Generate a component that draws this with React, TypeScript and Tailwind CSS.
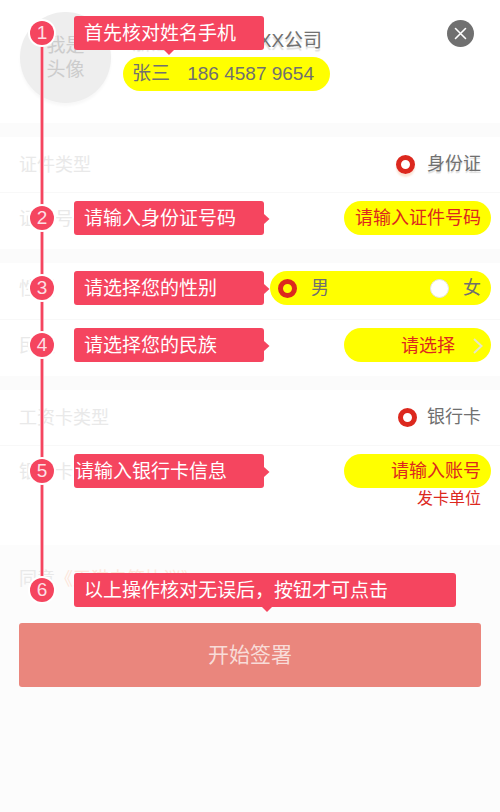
import { useState, type ReactNode } from 'react';

type Arrow = 'right' | 'down';

interface GuideProps {
  step: number;
  text: string;
  top?: string;
  width?: string;
  padding?: string;
  arrow?: ReactNode;
}

function ArrowMark({ direction, className }: { direction: Arrow; className: string }) {
  return (
    <svg
      className={`absolute text-[#f5455f] ${className}`}
      width={direction === 'right' ? 6 : 12}
      height={direction === 'right' ? 12 : 6}
      viewBox={direction === 'right' ? '0 0 6 12' : '0 0 12 6'}
      fill="currentColor"
      aria-hidden="true"
    >
      <path d={direction === 'right' ? 'M0 1L5.5 6L0 11Z' : 'M1 0L6 5L11 0Z'} />
    </svg>
  );
}

const rightArrow = <ArrowMark direction="right" className="left-full top-3" />;

function Guide({ step, text, top = 'top-2', width = 'w-[190px]', padding = 'px-2.5', arrow = rightArrow }: GuideProps) {
  return (
    <div className={`pointer-events-none absolute left-[30px] z-20 flex items-center gap-5 ${top}`}>
      <span className="flex size-6 items-center justify-center rounded-full bg-[#f5455f] text-[19px] leading-6 text-[#fddfe4] ring-2 ring-white">
        {step}
      </span>
      <div className={`relative h-[34px] rounded-[3px] bg-[#f5455f] text-[19px] leading-[36px] whitespace-nowrap text-white ${width} ${padding}`}>
        {text}
        {arrow}
      </div>
    </div>
  );
}

function Section({ children }: { children: ReactNode }) {
  return <section className="divide-y divide-[#f8f8f8] bg-white">{children}</section>;
}

function Gap() {
  return <div className="h-[14px] bg-[#fbfbfb]" />;
}

const radioClass =
  'size-[19px] shrink-0 appearance-none rounded-full border border-[#e4e4e4] bg-white checked:border-[5px] checked:border-[#dc281e] checked:bg-transparent';
const rowClass = 'relative flex items-start justify-between pt-2 pr-[9px] pl-[19px]';
const labelClass = 'text-[18px] leading-[36px] text-[#e9e9e9]';
const fieldClass =
  'h-[34px] w-[147px] rounded-full bg-[#ffff00] px-2.5 text-right text-[18px] text-[#dc281e] outline-none placeholder:text-[#dc281e] placeholder:opacity-100';

export default function App() {
  const [gender, setGender] = useState('male');
  const [idNumber, setIdNumber] = useState('');
  const [account, setAccount] = useState('');

  return (
    <main className="min-h-screen bg-[#fcfcfc] font-['Liberation_Sans','Noto_Sans_CJK_SC',sans-serif] text-[#707070]">
      <div className="relative">
        {/* Step line */}
        <div className="absolute top-[33px] bottom-[33px] left-[40px] z-10 w-[4px] border-x border-[#fab0bc] bg-[#f5455f]" />

        <header className="relative flex h-[123px] items-start bg-white pt-3 pr-[26px] pl-5">
          <div className="flex size-[91px] shrink-0 items-center justify-center rounded-full bg-[#eeeeee] text-[19px] leading-6 text-[#cccccc] shadow-[0_3px_3px_#f8f8f8]">
            我是
            <br />
            头像
          </div>
          <div className="ml-3 pt-4">
            <h1 className="pl-[9px] text-[19px] leading-[25px] whitespace-nowrap text-shadow-[0_3px_1px_#dddddd]">
              浙江XXXXXXXXX公司
            </h1>
            <p className="mt-1 flex h-[34px] w-[207px] items-center justify-between rounded-full bg-[#ffff00] pr-4 pl-[9px] text-[19px] whitespace-nowrap">
              <span>张三</span>
              <span>186 4587 9654</span>
            </p>
          </div>
          <button type="button" aria-label="关闭" className="mt-2 ml-auto flex size-[27px] shrink-0 items-center justify-center rounded-full bg-[#707070]">
            <svg width="13" height="13" viewBox="0 0 13 13" stroke="white" strokeWidth="1.6" strokeLinecap="round">
              <path d="M1.5 1.5L11.5 11.5M11.5 1.5L1.5 11.5" />
            </svg>
          </button>
          <Guide
            step={1}
            text="首先核对姓名手机"
            top="top-4"
            arrow={<ArrowMark direction="down" className="top-full left-[89px]" />}
          />
        </header>

        <Gap />

        <Section>
          <div className="flex h-14 items-center justify-between px-[19px]">
            <span className={labelClass}>证件类型</span>
            <label className="flex items-center gap-3 text-[18px] text-shadow-[0_2px_1px_#dddddd]">
              <input type="radio" name="idType" defaultChecked className={`${radioClass} shadow-[0_3px_2px_#fbe3d5]`} />
              身份证
            </label>
          </div>
          <div className={`${rowClass} h-14`}>
            <label htmlFor="idNumber" className={labelClass}>证件号码</label>
            <input
              id="idNumber"
              className={fieldClass}
              placeholder="请输入证件号码"
              value={idNumber}
              onChange={(e) => setIdNumber(e.target.value)}
            />
            <Guide step={2} text="请输入身份证号码" />
          </div>
        </Section>

        <Gap />

        <Section>
          <div className={`${rowClass} h-[57px]`}>
            <span className={labelClass}>性别</span>
            <div className="flex h-[34px] w-[221px] items-center justify-between rounded-full bg-[#ffff00] pr-2.5 pl-2 text-[18px]">
              <label className="flex items-center gap-[14px]">
                <input type="radio" name="gender" className={radioClass} checked={gender === 'male'} onChange={() => setGender('male')} />
                男
              </label>
              <label className="flex items-center gap-[14px]">
                <input type="radio" name="gender" className={radioClass} checked={gender === 'female'} onChange={() => setGender('female')} />
                女
              </label>
            </div>
            <Guide step={3} text="请选择您的性别" />
          </div>
          <div className={`${rowClass} h-14`}>
            <label htmlFor="nation" className={labelClass}>民族</label>
            <div className="relative">
              <select
                id="nation"
                className="block h-[34px] w-[147px] appearance-none rounded-full bg-[#ffff00] pt-0.5 pr-9 pl-2.5 text-right text-[18px] text-[#dc281e] outline-none [text-align-last:right]"
              >
                <option>请选择</option>
                <option>汉族</option>
              </select>
              <svg
                className="pointer-events-none absolute top-2.5 right-2"
                width="10"
                height="16"
                viewBox="0 0 10 16"
                fill="none"
                stroke="#e6e6c8"
                strokeWidth="2"
              >
                <path d="M1 1L8.5 8L1 15" />
              </svg>
            </div>
            <Guide step={4} text="请选择您的民族" />
          </div>
        </Section>

        <Gap />

        <Section>
          <div className="flex h-14 items-center justify-between px-[19px]">
            <span className={labelClass}>工资卡类型</span>
            <label className="flex items-center gap-2.5 text-[18px]">
              <input type="radio" name="cardType" defaultChecked className={radioClass} />
              银行卡
            </label>
          </div>
          <div className={`${rowClass} h-[99px]`}>
            <label htmlFor="account" className={labelClass}>银行卡号</label>
            <div className="flex flex-col items-end">
              <input
                id="account"
                className={fieldClass}
                placeholder="请输入账号"
                value={account}
                onChange={(e) => setAccount(e.target.value)}
              />
              <span className="pr-2.5 text-[16px] leading-[22px] text-[#dc281e]">发卡单位</span>
            </div>
            <Guide step={5} text="请输入银行卡信息" padding="px-px" />
          </div>
        </Section>

        {/* Agreement */}
        <div className="relative h-[78px] px-[19px] pt-[22px] text-[18px] leading-6 text-[#e9e9e9]">
          同意<a href="#agreement" className="text-[#fde6da]">《天猫电签协议》</a>
          <Guide
            step={6}
            text="以上操作核对无误后，按钮才可点击"
            top="top-7"
            width="w-[382px]"
            arrow={<ArrowMark direction="down" className="top-full left-[187px]" />}
          />
        </div>
      </div>

      <div className="px-[19px]">
        <button type="button" className="block h-16 w-full rounded-[3px] bg-[#ea867d] text-[21px] text-[#f8dcd8]">
          开始签署
        </button>
      </div>
    </main>
  );
}
